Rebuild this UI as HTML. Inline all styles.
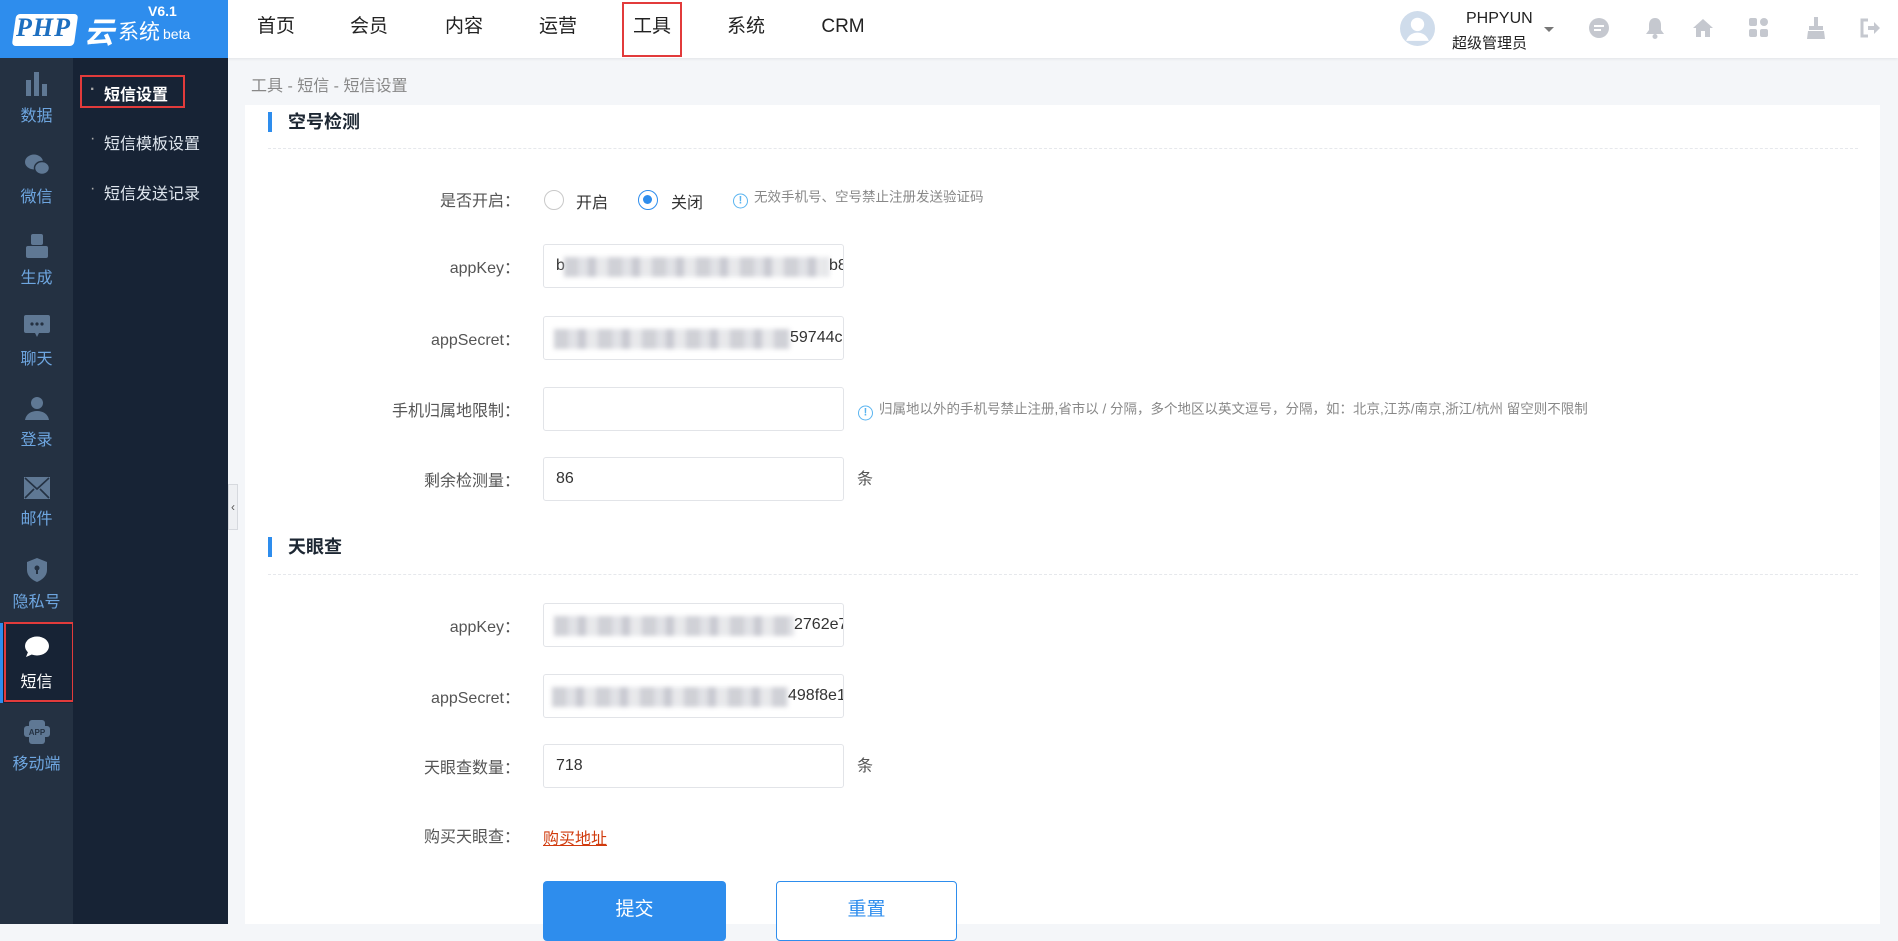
<!DOCTYPE html>
<html><head><meta charset="utf-8">
<style>
*{margin:0;padding:0;box-sizing:border-box}
body{width:1898px;height:924px;overflow:hidden;background:#f4f6f9;font-family:"Liberation Sans","Noto Sans CJK SC",sans-serif;position:relative}
.abs{position:absolute}
#top{left:0;top:0;width:1898px;height:58px;background:#fff;box-shadow:0 1px 3px rgba(0,0,0,.08)}
#logo{left:0;top:0;width:228px;height:58px;background:#2e8ded}
.nav{top:0;height:58px;line-height:54px;font-size:19px;color:#222;transform:translateX(-50%)}
#side{left:0;top:58px;width:73px;height:866px;background:#243142}
#sub{left:73px;top:58px;width:155px;height:866px;background:#172335}
.si{position:absolute;left:0;width:73px;text-align:center;color:#6ea6e0;font-size:16px}
.si svg{display:block;margin:0 auto 6px}
.sm{position:absolute;left:88px;color:#dfe6ee;font-size:16px}
.sm:before{content:"·";position:absolute;left:-14px;color:#aaa}
#card{left:245px;top:105px;width:1635px;height:819px;background:#fff}
.sec{position:absolute;left:268px;font-size:18px;font-weight:bold;color:#1d2733;padding-left:16px;border-left:4px solid #2e8ded;line-height:20px}
.dash{position:absolute;left:268px;width:1590px;border-top:1px dashed #e6e8ec}
.lab{position:absolute;right:1378px;font-size:16px;color:#555;transform:translateY(-50%);white-space:nowrap}
.inp{position:absolute;left:543px;width:301px;height:44px;border:1px solid #e2e4e8;border-radius:3px;transform:translateY(-50%);font-size:16px;color:#333;line-height:42px;padding-left:12px;overflow:hidden;white-space:nowrap}
.blur{position:absolute;top:12px;height:20px;background:repeating-linear-gradient(90deg,#c8c9d0 0 14px,#dcdde2 14px 24px,#c0c1ca 24px 32px,#e4e5e8 32px 44px);filter:blur(2.5px);opacity:.85}
.hint{position:absolute;font-size:13.5px;color:#888;transform:translateY(-50%);white-space:nowrap}
.hint i{display:inline-block;width:15px;height:15px;border:1.5px solid #5ab4f0;border-radius:50%;color:#5ab4f0;font-style:normal;font-size:11px;line-height:12px;text-align:center;margin-right:6px;vertical-align:-2px;font-weight:bold}
.unit{position:absolute;left:857px;font-size:16px;color:#555;transform:translateY(-50%)}
.hi{top:28px;transform:translate(-50%,-50%)}
</style></head><body>
<div id="top" class="abs"></div>
<div id="logo" class="abs">
  <div class="abs" style="left:14px;top:14px;width:62px;height:32px;background:#fff;border-radius:4px;transform:skewX(-8deg)"></div>
  <div class="abs" style="left:16px;top:13px;font:italic bold 26px 'Liberation Serif',serif;color:#1d6fc0;letter-spacing:1px">PHP</div>
  <div class="abs" style="left:84px;top:8px;font-size:30px;font-weight:bold;color:#fff;font-style:italic">云</div>
  <div class="abs" style="left:118px;top:16px;font-size:21px;color:#fff">系统</div>
  <div class="abs" style="left:163px;top:26px;font-size:14px;color:#fff">beta</div>
  <div class="abs" style="left:148px;top:3px;font-size:14px;color:#fff;font-weight:bold">V6.1</div>
</div>
<div class="abs nav" style="left:276px">首页</div>
<div class="abs nav" style="left:369px">会员</div>
<div class="abs nav" style="left:464px">内容</div>
<div class="abs nav" style="left:558px">运营</div>
<div class="abs nav" style="left:652px">工具</div>
<div class="abs" style="left:622px;top:2px;width:60px;height:55px;border:2px solid #e23b3b"></div>
<div class="abs nav" style="left:746px">系统</div>
<div class="abs nav" style="left:843px">CRM</div>

<svg class="abs" style="left:1400px;top:11px" width="35" height="35" viewBox="0 0 34 34"><circle cx="17" cy="17" r="17" fill="#cfdceb"/><circle cx="17" cy="13" r="6.5" fill="#fff"/><path d="M6 29c2-6 7-8 11-8s9 2 11 8" fill="#fff"/></svg>
<div class="abs" style="left:1466px;top:10px;font-size:16px;color:#222">PHPYUN</div>
<div class="abs" style="left:1452px;top:32px;font-size:15px;color:#222">超级管理员</div>
<div class="abs" style="left:1544px;top:27px;border:5px solid transparent;border-top:5px solid #777"></div>
<svg class="abs hi" style="left:1599px" width="22" height="22" viewBox="0 0 22 22"><circle cx="11" cy="11" r="10" fill="#c5c8cf"/><rect x="6" y="8" width="10" height="2" fill="#fff"/><rect x="6" y="12" width="7" height="2" fill="#fff"/></svg>
<svg class="abs hi" style="left:1655px" width="20" height="22" viewBox="0 0 20 22"><path d="M10 1c-4 0-6 3-6 7v5l-3 4h18l-3-4V8c0-4-2-7-6-7z" fill="#c5c8cf"/><circle cx="10" cy="19.5" r="2.5" fill="#c5c8cf"/></svg>
<svg class="abs hi" style="left:1703px" width="22" height="20" viewBox="0 0 22 20"><path d="M11 1L1 10h3v9h5v-6h4v6h5v-9h3z" fill="#c5c8cf"/></svg>
<svg class="abs hi" style="left:1759px" width="20" height="20" viewBox="0 0 20 20"><rect x="0" y="0" width="8" height="8" rx="2" fill="#c5c8cf"/><rect x="0" y="11" width="8" height="8" rx="2" fill="#c5c8cf"/><rect x="11" y="11" width="8" height="8" rx="2" fill="#c5c8cf"/><rect x="11" y="0" width="8" height="8" rx="4" fill="#c5c8cf"/></svg>
<svg class="abs hi" style="left:1816px" width="20" height="22" viewBox="0 0 20 22"><rect x="8" y="0" width="4" height="9" fill="#c5c8cf"/><rect x="3" y="9" width="14" height="4" fill="#c5c8cf"/><path d="M2 14h16l1 8H1z" fill="#c5c8cf"/></svg>
<svg class="abs hi" style="left:1870px" width="22" height="20" viewBox="0 0 22 20"><path d="M9 2H3v16h6" stroke="#c5c8cf" stroke-width="3" fill="none"/><path d="M9 8h6V4l6 6-6 6v-4H9z" fill="#c5c8cf"/></svg>

<div id="side" class="abs">
  <div class="si" style="top:14px"><svg width="26" height="24" viewBox="0 0 26 24" fill="#5f7894"><rect x="2" y="8" width="5" height="16"/><rect x="10" y="0" width="5" height="24"/><rect x="18" y="12" width="5" height="12"/></svg>数据</div>
  <div class="si" style="top:95px"><svg width="26" height="24" viewBox="0 0 26 24" fill="#5f7894"><ellipse cx="10" cy="9" rx="9" ry="7.5"/><ellipse cx="18" cy="15" rx="7.5" ry="6.5" stroke="#243142" stroke-width="1.5"/></svg>微信</div>
  <div class="si" style="top:176px"><svg width="24" height="24" viewBox="0 0 24 24" fill="#5f7894"><rect x="6" y="0" width="12" height="11" rx="2"/><rect x="1" y="12" width="22" height="12" rx="2"/></svg>生成</div>
  <div class="si" style="top:257px"><svg width="26" height="24" viewBox="0 0 26 24" fill="#5f7894"><path d="M2 0h22a2 2 0 0 1 2 2v14a2 2 0 0 1-2 2H15l-2 4-2-4H2a2 2 0 0 1-2-2V2a2 2 0 0 1 2-2z"/><circle cx="8" cy="9" r="1.6" fill="#243142"/><circle cx="13" cy="9" r="1.6" fill="#243142"/><circle cx="18" cy="9" r="1.6" fill="#243142"/></svg>聊天</div>
  <div class="si" style="top:338px"><svg width="24" height="24" viewBox="0 0 24 24" fill="#5f7894"><circle cx="12" cy="7" r="6"/><path d="M0 24c1-6 6-9 12-9s11 3 12 9z"/></svg>登录</div>
  <div class="si" style="top:419px"><svg width="26" height="22" viewBox="0 0 26 22" fill="#5f7894"><path d="M0 0h26v22H0z"/><path d="M1 1l12 11L25 1M1 21l9-9M25 21l-9-9" stroke="#243142" stroke-width="1.6" fill="none"/></svg>邮件</div>
  <div class="si" style="top:500px"><svg width="22" height="24" viewBox="0 0 22 24" fill="#5f7894"><path d="M11 0l10 4v8c0 6-5 10-10 12C6 22 1 18 1 12V4z"/><circle cx="11" cy="10" r="2.5" fill="#243142"/><rect x="10" y="11" width="2" height="5" fill="#243142"/></svg>隐私号</div>
  <div class="abs" style="left:0;top:565px;width:73px;height:80px;background:#172335;border-left:3px solid #2e8ded"></div>
  <div class="si" style="top:578px;color:#fff"><svg width="26" height="22" viewBox="0 0 26 22" fill="#fff" style="margin-bottom:10px"><ellipse cx="13" cy="10" rx="12" ry="9.5"/><path d="M4 16l-2 5 7-3z"/></svg>短信</div>
  <div class="abs" style="left:4px;top:564px;width:70px;height:80px;border:2px solid #e23b3b"></div>
  <div class="si" style="top:662px"><svg width="26" height="24" viewBox="0 0 26 24" fill="#5f7894"><rect x="5" y="0" width="16" height="24" rx="3"/><rect x="0" y="6" width="26" height="11" rx="3"/><text x="13" y="15" font-size="8" font-weight="bold" text-anchor="middle" fill="#243142" font-family="Liberation Sans">APP</text></svg>移动端</div>
</div>
<div id="sub" class="abs">
  <div class="sm" style="top:23px;left:31px;color:#fff;font-weight:bold">短信设置</div>
  <div class="abs" style="left:7px;top:17px;width:105px;height:33px;border:2px solid #e23b3b"></div>
  <div class="sm" style="top:72px;left:31px">短信模板设置</div>
  <div class="sm" style="top:122px;left:31px">短信发送记录</div>
</div>
<div class="abs" style="left:228px;top:484px;width:10px;height:46px;background:#eef0f3;border:1px solid #d6d9de;font-size:12px;color:#555;line-height:44px;text-align:center">‹</div>

<div class="abs" style="left:251px;top:72px;font-size:16px;color:#888">工具 - 短信 - 短信设置</div>
<div id="card" class="abs"></div>

<div class="sec" style="top:112px">空号检测</div>
<div class="dash" style="top:148px"></div>
<div class="lab" style="top:199px">是否开启：</div>
<div class="abs" style="left:544px;top:190px;width:20px;height:20px;border:1.5px solid #c9c9c9;border-radius:50%"></div>
<div class="abs" style="left:576px;top:189px;font-size:16px;color:#333">开启</div>
<div class="abs" style="left:638px;top:190px;width:20px;height:20px;border:1.5px solid #2e8ded;border-radius:50%"><div style="width:9px;height:9px;border-radius:50%;background:#2e8ded;margin:4px"></div></div>
<div class="abs" style="left:671px;top:189px;font-size:16px;color:#333">关闭</div>
<div class="hint" style="left:733px;top:197px"><i>!</i>无效手机号、空号禁止注册发送验证码</div>

<div class="lab" style="top:266px">appKey：</div>
<div class="inp" style="top:266px">b<div class="blur" style="left:20px;width:265px"></div><span style="position:absolute;left:285px">b8</span></div>
<div class="lab" style="top:338px">appSecret：</div>
<div class="inp" style="top:338px"><div class="blur" style="left:10px;width:236px"></div><span style="position:absolute;left:246px">59744c</span></div>
<div class="lab" style="top:409px">手机归属地限制：</div>
<div class="inp" style="top:409px"></div>
<div class="hint" style="left:858px;top:409px"><i>!</i>归属地以外的手机号禁止注册,省市以 / 分隔，多个地区以英文逗号，分隔，如：北京,江苏/南京,浙江/杭州 留空则不限制</div>
<div class="lab" style="top:479px">剩余检测量：</div>
<div class="inp" style="top:479px">86</div>
<div class="unit" style="top:477px">条</div>

<div class="sec" style="top:537px">天眼查</div>
<div class="dash" style="top:574px"></div>
<div class="lab" style="top:625px">appKey：</div>
<div class="inp" style="top:625px"><div class="blur" style="left:10px;width:240px"></div><span style="position:absolute;left:250px">2762e7a</span></div>
<div class="lab" style="top:696px">appSecret：</div>
<div class="inp" style="top:696px"><div class="blur" style="left:8px;width:236px"></div><span style="position:absolute;left:244px">498f8e1aca</span></div>
<div class="lab" style="top:766px">天眼查数量：</div>
<div class="inp" style="top:766px">718</div>
<div class="unit" style="top:764px">条</div>
<div class="lab" style="top:835px">购买天眼查：</div>
<div class="abs" style="left:543px;top:825px;font-size:16px;color:#d03a0c;text-decoration:underline">购买地址</div>

<div class="abs" style="left:543px;top:881px;width:183px;height:60px;background:#2e8ded;border-radius:4px;color:#fff;font-size:19px;text-align:center;line-height:58px">提交</div>
<div class="abs" style="left:776px;top:881px;width:181px;height:60px;border:1px solid #2e8ded;border-radius:4px;color:#2e8ded;font-size:19px;text-align:center;line-height:56px;background:#fff">重置</div>
</body></html>
